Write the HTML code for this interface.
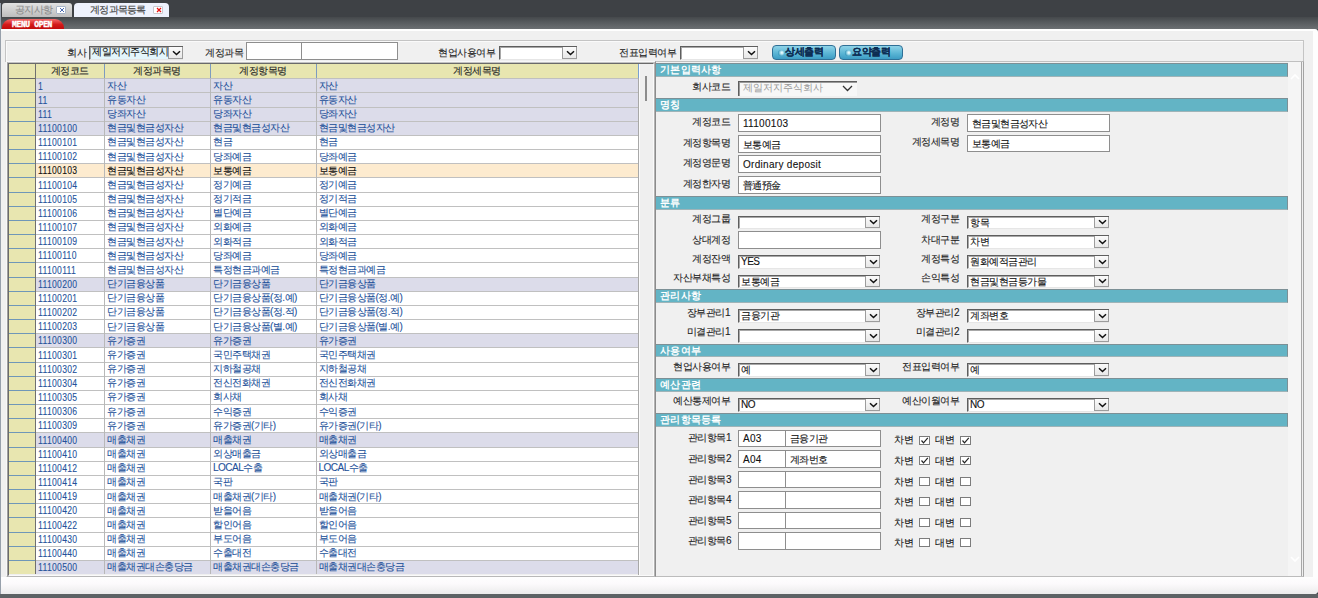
<!DOCTYPE html><html><head><meta charset="utf-8"><style>
*{box-sizing:border-box;margin:0;padding:0}
.t,.lbl,.sel,.inp{-webkit-text-stroke:0.1px currentColor}
html,body{width:1318px;height:598px;overflow:hidden;background:#3e4145;font-family:"Liberation Sans",sans-serif;}
.a{position:absolute}
.t{position:absolute;white-space:nowrap;font-size:10px;line-height:12px;color:#222;letter-spacing:-0.5px}
.sec{position:absolute;background:#63b4c5;border:1px solid #7c9096;border-left:none;border-bottom-color:#9fb4b8;color:#fff;font-weight:bold;font-size:9.6px;line-height:12px;padding-left:4px;letter-spacing:0.3px}
.inp{position:absolute;background:#fff;border:1px solid #8e8e8e;font-size:10px;line-height:14px;padding-left:4px;color:#111;white-space:nowrap;letter-spacing:-0.3px}
.sel{position:absolute;background:#fff;border-top:1px solid #5e5e5e;border-left:1px solid #5e5e5e;box-shadow:inset 1px 1px 0 #a8a8a8;border-bottom:1px solid #e6e6e6;font-size:10px;line-height:12px;padding-left:2px;color:#111;white-space:nowrap;overflow:hidden;letter-spacing:-0.5px}
.btn{position:absolute;right:0;top:0;bottom:0;width:15px;background:linear-gradient(#fbfbfb,#e8e8e8);border:1px solid #9c9c9c;border-top:none}
.btn svg{position:absolute;left:3px;top:50%;margin-top:-3px}
.lbl{position:absolute;white-space:nowrap;font-size:10px;line-height:12px;color:#1c1c1c;text-align:right;letter-spacing:-0.5px}
.cb{position:absolute;width:11px;height:9px;background:#fff;border:1px solid #7c7c7c}
</style></head><body>
<div class="a" style="left:0px;top:0px;width:1318px;height:17px;background:#3e4145"></div>
<div class="a" style="left:0px;top:17px;width:1318px;height:12px;background:linear-gradient(#45484b,#55595c 40%,#6b6f72)"></div>
<div class="a" style="left:2px;top:3px;width:70px;height:14px;background:linear-gradient(#e2e2e2,#bdbdbd);border-radius:3px 3px 0 0"></div>
<div class="t" style="left:15px;top:4px;color:#8c8c8c;font-size:10px;letter-spacing:-0.7px">공지사항</div>
<div class="a" style="left:56px;top:6px;width:10px;height:8px;background:#fff;border:1px solid #a9b6c8;border-radius:1px"><svg width="8" height="6" style="position:absolute;left:1px;top:0px"><path d="M2 1L6 5M6 1L2 5" stroke="#4a6ab0" stroke-width="1"/></svg></div>
<div class="a" style="left:74px;top:3px;width:95px;height:14px;background:#eef2fd;border-radius:4px 4px 0 0"></div>
<div class="t" style="left:90px;top:4px;color:#3a3a3a;font-size:10px;letter-spacing:-0.75px">계정과목등록</div>
<div class="a" style="left:153px;top:6px;width:10px;height:8px;background:#fff;border:1px solid #c9c9d0;border-radius:1px"><svg width="8" height="6" style="position:absolute;left:1px;top:0px"><path d="M2 1L6 5M6 1L2 5" stroke="#e81010" stroke-width="1.2"/></svg></div>
<div class="a" style="left:2px;top:19px;width:62px;height:10px;background:linear-gradient(#f46a6a,#d41a1a 55%,#c00c0c);border-radius:9px 9px 0 0"></div>
<div class="t" style="left:12px;top:20px;color:#fff;font-family:'Liberation Mono',monospace;font-weight:bold;font-size:8px;line-height:10px;letter-spacing:-0.35px;transform:scaleY(1.05);transform-origin:0 0;-webkit-text-stroke:0.35px #fff">MENU OPEN</div>
<div class="a" style="left:1px;top:29px;width:1317px;height:565px;background:#fefefe;border-radius:0 3px 4px 0"></div>
<div class="a" style="left:1px;top:31px;width:1312px;height:546px;background:#f0f0f0"></div>
<div class="a" style="left:1px;top:577px;width:1317px;height:17px;background:linear-gradient(#fefefe,#fcfafc 40%,#ebebeb);border-radius:0 0 4px 0"></div>
<div class="a" style="left:0px;top:3px;width:1px;height:595px;background:#97a0ab"></div>
<div class="a" style="left:5px;top:40px;width:1299px;height:22px;border-top:1px solid #c4c4c4;border-left:1px solid #c4c4c4;border-right:1px solid #c4c4c4;box-shadow:inset 1px 1px 0 #fafafa"></div>
<div class="lbl" style="left:67px;top:47px">회사</div>
<div class="sel" style="left:89px;top:46px;width:94px;height:14px;background:#e3f5fb;font-size:10px;line-height:10px">제일저지주식회시<div class="btn"><svg width="9" height="6"><path d="M1 1.2L4.5 4.5L8 1.2" stroke="#111" stroke-width="1.5" fill="none"/></svg></div></div>
<div class="lbl" style="left:205px;top:47px">계정과목</div>
<div class="inp" style="left:246px;top:42px;width:56px;height:18px;"></div>
<div class="inp" style="left:301px;top:42px;width:97px;height:18px;"></div>
<div class="lbl" style="left:438px;top:47px">현업사용여부</div>
<div class="sel" style="left:499px;top:46px;width:78px;height:14px;"><div class="btn"><svg width="9" height="6"><path d="M1 1.2L4.5 4.5L8 1.2" stroke="#111" stroke-width="1.5" fill="none"/></svg></div></div>
<div class="lbl" style="left:619px;top:47px">전표입력여부</div>
<div class="sel" style="left:680px;top:46px;width:78px;height:14px;"><div class="btn"><svg width="9" height="6"><path d="M1 1.2L4.5 4.5L8 1.2" stroke="#111" stroke-width="1.5" fill="none"/></svg></div></div>
<div class="a" style="left:772px;top:45px;width:64px;height:15px;background:linear-gradient(#8fd3e8,#58b3d3 60%,#3d9cc4);border:1px solid #2f6f96;border-radius:4px"></div>
<div class="a" style="left:778px;top:50px;width:6px;height:6px;border-radius:50%;background:radial-gradient(circle at 65% 45%,#ffffff 0,#bfe9f4 25%,#3f9cc0 70%,#2a7aa0 100%)"></div>
<div class="t" style="left:785px;top:46px;color:#0c2c52;font-weight:bold;font-size:10px">상세출력</div>
<div class="a" style="left:839px;top:45px;width:64px;height:15px;background:linear-gradient(#8fd3e8,#58b3d3 60%,#3d9cc4);border:1px solid #2f6f96;border-radius:4px"></div>
<div class="a" style="left:845px;top:50px;width:6px;height:6px;border-radius:50%;background:radial-gradient(circle at 65% 45%,#ffffff 0,#bfe9f4 25%,#3f9cc0 70%,#2a7aa0 100%)"></div>
<div class="t" style="left:852px;top:46px;color:#0c2c52;font-weight:bold;font-size:10px">요약출력</div>
<div class="a" style="left:6px;top:61px;width:1298px;height:516px;border-top:1px solid #f8f8f8;border-left:1px solid #f8f8f8;border-right:1px solid #a8a8a8;border-bottom:1px solid #b8b8b8"></div>
<div class="a" style="left:7px;top:62px;width:648px;height:515px;border-top:1px solid #c2c2c2;border-left:1px solid #a0a0a0;border-right:1px solid #b4b4b4;border-bottom:1px solid #b8b8b8"></div>
<div class="a" style="left:8px;top:63px;width:646px;height:513px;background:#efefef;border-top:1px solid #6a6a6a;border-left:1px solid #6a6a6a;border-right:1px solid #fafafa;border-bottom:1px solid #fafafa"></div>
<div class="a" style="left:9px;top:64px;width:26px;height:510px;background:#e8e6b0"></div>
<div class="a" style="left:35px;top:64px;width:603px;height:14px;background:#e8e6b0"></div>
<div class="a" style="left:9px;top:78px;width:629px;height:1px;background:#6a6a6a"></div>
<div class="a" style="left:35px;top:64px;width:1px;height:510px;background:#707070"></div>
<div class="a" style="left:104px;top:64px;width:1px;height:14px;background:#7d9bbf"></div>
<div class="a" style="left:210px;top:64px;width:1px;height:14px;background:#7d9bbf"></div>
<div class="a" style="left:315.5px;top:64px;width:1.0px;height:14px;background:#7d9bbf"></div>
<div class="t" style="left:35px;width:69px;top:65px;text-align:center;color:#222">계정코드</div>
<div class="t" style="left:104px;width:106px;top:65px;text-align:center;color:#222">계정과목명</div>
<div class="t" style="left:210px;width:105.5px;top:65px;text-align:center;color:#222">계정항목명</div>
<div class="t" style="left:315.5px;width:322.5px;top:65px;text-align:center;color:#222">계정세목명</div>
<div class="a" style="left:36px;top:79.30px;width:602px;height:13.16px;background:#dcdcea"></div>
<div class="a" style="left:36px;top:78.30px;width:602px;height:1px;background:#c0c0c0"></div>
<div class="t" style="left:38px;top:79.50px;color:#24519a;font-size:11px;letter-spacing:0.4px;transform:scaleX(0.78);transform-origin:0 0">1</div>
<div class="t" style="left:107px;top:79.80px;color:#24519a">자산</div>
<div class="t" style="left:213px;top:79.80px;color:#24519a">자산</div>
<div class="t" style="left:318.5px;top:79.80px;color:#24519a">자산</div>
<div class="a" style="left:36px;top:93.46px;width:602px;height:13.16px;background:#dcdcea"></div>
<div class="a" style="left:9px;top:92.46px;width:26px;height:1px;background:#6f97b8"></div>
<div class="a" style="left:36px;top:92.46px;width:602px;height:1px;background:#c0c0c0"></div>
<div class="t" style="left:38px;top:93.66px;color:#24519a;font-size:11px;letter-spacing:0.4px;transform:scaleX(0.78);transform-origin:0 0">11</div>
<div class="t" style="left:107px;top:93.96px;color:#24519a">유동자산</div>
<div class="t" style="left:213px;top:93.96px;color:#24519a">유동자산</div>
<div class="t" style="left:318.5px;top:93.96px;color:#24519a">유동자산</div>
<div class="a" style="left:36px;top:107.63px;width:602px;height:13.16px;background:#dcdcea"></div>
<div class="a" style="left:9px;top:106.63px;width:26px;height:1px;background:#6f97b8"></div>
<div class="a" style="left:36px;top:106.63px;width:602px;height:1px;background:#c0c0c0"></div>
<div class="t" style="left:38px;top:107.83px;color:#24519a;font-size:11px;letter-spacing:0.4px;transform:scaleX(0.78);transform-origin:0 0">111</div>
<div class="t" style="left:107px;top:108.13px;color:#24519a">당좌자산</div>
<div class="t" style="left:213px;top:108.13px;color:#24519a">당좌자산</div>
<div class="t" style="left:318.5px;top:108.13px;color:#24519a">당좌자산</div>
<div class="a" style="left:36px;top:121.79px;width:602px;height:13.16px;background:#dcdcea"></div>
<div class="a" style="left:9px;top:120.79px;width:26px;height:1px;background:#6f97b8"></div>
<div class="a" style="left:36px;top:120.79px;width:602px;height:1px;background:#c0c0c0"></div>
<div class="t" style="left:38px;top:121.99px;color:#24519a;font-size:11px;letter-spacing:0.4px;transform:scaleX(0.78);transform-origin:0 0">11100100</div>
<div class="t" style="left:107px;top:122.29px;color:#24519a">현금및현금성자산</div>
<div class="t" style="left:213px;top:122.29px;color:#24519a">현금및현금성자산</div>
<div class="t" style="left:318.5px;top:122.29px;color:#24519a">현금및현금성자산</div>
<div class="a" style="left:36px;top:135.95px;width:602px;height:13.16px;background:#ffffff"></div>
<div class="a" style="left:9px;top:134.95px;width:26px;height:1px;background:#6f97b8"></div>
<div class="a" style="left:36px;top:134.95px;width:602px;height:1px;background:#c0c0c0"></div>
<div class="t" style="left:38px;top:136.15px;color:#24519a;font-size:11px;letter-spacing:0.4px;transform:scaleX(0.78);transform-origin:0 0">11100101</div>
<div class="t" style="left:107px;top:136.45px;color:#24519a">현금및현금성자산</div>
<div class="t" style="left:213px;top:136.45px;color:#24519a">현금</div>
<div class="t" style="left:318.5px;top:136.45px;color:#24519a">현금</div>
<div class="a" style="left:36px;top:150.11px;width:602px;height:13.16px;background:#ffffff"></div>
<div class="a" style="left:9px;top:149.11px;width:26px;height:1px;background:#6f97b8"></div>
<div class="a" style="left:36px;top:149.11px;width:602px;height:1px;background:#c0c0c0"></div>
<div class="t" style="left:38px;top:150.31px;color:#24519a;font-size:11px;letter-spacing:0.4px;transform:scaleX(0.78);transform-origin:0 0">11100102</div>
<div class="t" style="left:107px;top:150.61px;color:#24519a">현금및현금성자산</div>
<div class="t" style="left:213px;top:150.61px;color:#24519a">당좌예금</div>
<div class="t" style="left:318.5px;top:150.61px;color:#24519a">당좌예금</div>
<div class="a" style="left:36px;top:164.28px;width:602px;height:13.16px;background:#fdebcf"></div>
<div class="a" style="left:9px;top:163.28px;width:26px;height:1px;background:#6f97b8"></div>
<div class="a" style="left:36px;top:163.28px;width:602px;height:1px;background:#c0c0c0"></div>
<div class="t" style="left:38px;top:164.48px;color:#111;font-size:11px;letter-spacing:0.4px;transform:scaleX(0.78);transform-origin:0 0">11100103</div>
<div class="t" style="left:107px;top:164.78px;color:#111">현금및현금성자산</div>
<div class="t" style="left:213px;top:164.78px;color:#111">보통예금</div>
<div class="t" style="left:318.5px;top:164.78px;color:#111">보통예금</div>
<div class="a" style="left:36px;top:178.44px;width:602px;height:13.16px;background:#ffffff"></div>
<div class="a" style="left:9px;top:177.44px;width:26px;height:1px;background:#6f97b8"></div>
<div class="a" style="left:36px;top:177.44px;width:602px;height:1px;background:#c0c0c0"></div>
<div class="t" style="left:38px;top:178.64px;color:#24519a;font-size:11px;letter-spacing:0.4px;transform:scaleX(0.78);transform-origin:0 0">11100104</div>
<div class="t" style="left:107px;top:178.94px;color:#24519a">현금및현금성자산</div>
<div class="t" style="left:213px;top:178.94px;color:#24519a">정기예금</div>
<div class="t" style="left:318.5px;top:178.94px;color:#24519a">정기예금</div>
<div class="a" style="left:36px;top:192.60px;width:602px;height:13.16px;background:#ffffff"></div>
<div class="a" style="left:9px;top:191.60px;width:26px;height:1px;background:#6f97b8"></div>
<div class="a" style="left:36px;top:191.60px;width:602px;height:1px;background:#c0c0c0"></div>
<div class="t" style="left:38px;top:192.80px;color:#24519a;font-size:11px;letter-spacing:0.4px;transform:scaleX(0.78);transform-origin:0 0">11100105</div>
<div class="t" style="left:107px;top:193.10px;color:#24519a">현금및현금성자산</div>
<div class="t" style="left:213px;top:193.10px;color:#24519a">정기적금</div>
<div class="t" style="left:318.5px;top:193.10px;color:#24519a">정기적금</div>
<div class="a" style="left:36px;top:206.77px;width:602px;height:13.16px;background:#ffffff"></div>
<div class="a" style="left:9px;top:205.77px;width:26px;height:1px;background:#6f97b8"></div>
<div class="a" style="left:36px;top:205.77px;width:602px;height:1px;background:#c0c0c0"></div>
<div class="t" style="left:38px;top:206.97px;color:#24519a;font-size:11px;letter-spacing:0.4px;transform:scaleX(0.78);transform-origin:0 0">11100106</div>
<div class="t" style="left:107px;top:207.27px;color:#24519a">현금및현금성자산</div>
<div class="t" style="left:213px;top:207.27px;color:#24519a">별단예금</div>
<div class="t" style="left:318.5px;top:207.27px;color:#24519a">별단예금</div>
<div class="a" style="left:36px;top:220.93px;width:602px;height:13.16px;background:#ffffff"></div>
<div class="a" style="left:9px;top:219.93px;width:26px;height:1px;background:#6f97b8"></div>
<div class="a" style="left:36px;top:219.93px;width:602px;height:1px;background:#c0c0c0"></div>
<div class="t" style="left:38px;top:221.13px;color:#24519a;font-size:11px;letter-spacing:0.4px;transform:scaleX(0.78);transform-origin:0 0">11100107</div>
<div class="t" style="left:107px;top:221.43px;color:#24519a">현금및현금성자산</div>
<div class="t" style="left:213px;top:221.43px;color:#24519a">외화예금</div>
<div class="t" style="left:318.5px;top:221.43px;color:#24519a">외화예금</div>
<div class="a" style="left:36px;top:235.09px;width:602px;height:13.16px;background:#ffffff"></div>
<div class="a" style="left:9px;top:234.09px;width:26px;height:1px;background:#6f97b8"></div>
<div class="a" style="left:36px;top:234.09px;width:602px;height:1px;background:#c0c0c0"></div>
<div class="t" style="left:38px;top:235.29px;color:#24519a;font-size:11px;letter-spacing:0.4px;transform:scaleX(0.78);transform-origin:0 0">11100109</div>
<div class="t" style="left:107px;top:235.59px;color:#24519a">현금및현금성자산</div>
<div class="t" style="left:213px;top:235.59px;color:#24519a">외화적금</div>
<div class="t" style="left:318.5px;top:235.59px;color:#24519a">외화적금</div>
<div class="a" style="left:36px;top:249.25px;width:602px;height:13.16px;background:#ffffff"></div>
<div class="a" style="left:9px;top:248.25px;width:26px;height:1px;background:#6f97b8"></div>
<div class="a" style="left:36px;top:248.25px;width:602px;height:1px;background:#c0c0c0"></div>
<div class="t" style="left:38px;top:249.45px;color:#24519a;font-size:11px;letter-spacing:0.4px;transform:scaleX(0.78);transform-origin:0 0">11100110</div>
<div class="t" style="left:107px;top:249.75px;color:#24519a">현금및현금성자산</div>
<div class="t" style="left:213px;top:249.75px;color:#24519a">당좌예금</div>
<div class="t" style="left:318.5px;top:249.75px;color:#24519a">당좌예금</div>
<div class="a" style="left:36px;top:263.42px;width:602px;height:13.16px;background:#ffffff"></div>
<div class="a" style="left:9px;top:262.42px;width:26px;height:1px;background:#6f97b8"></div>
<div class="a" style="left:36px;top:262.42px;width:602px;height:1px;background:#c0c0c0"></div>
<div class="t" style="left:38px;top:263.62px;color:#24519a;font-size:11px;letter-spacing:0.4px;transform:scaleX(0.78);transform-origin:0 0">11100111</div>
<div class="t" style="left:107px;top:263.92px;color:#24519a">현금및현금성자산</div>
<div class="t" style="left:213px;top:263.92px;color:#24519a">특정현금과예금</div>
<div class="t" style="left:318.5px;top:263.92px;color:#24519a">특정현금과예금</div>
<div class="a" style="left:36px;top:277.58px;width:602px;height:13.16px;background:#dcdcea"></div>
<div class="a" style="left:9px;top:276.58px;width:26px;height:1px;background:#6f97b8"></div>
<div class="a" style="left:36px;top:276.58px;width:602px;height:1px;background:#c0c0c0"></div>
<div class="t" style="left:38px;top:277.78px;color:#24519a;font-size:11px;letter-spacing:0.4px;transform:scaleX(0.78);transform-origin:0 0">11100200</div>
<div class="t" style="left:107px;top:278.08px;color:#24519a">단기금융상품</div>
<div class="t" style="left:213px;top:278.08px;color:#24519a">단기금융상품</div>
<div class="t" style="left:318.5px;top:278.08px;color:#24519a">단기금융상품</div>
<div class="a" style="left:36px;top:291.74px;width:602px;height:13.16px;background:#ffffff"></div>
<div class="a" style="left:9px;top:290.74px;width:26px;height:1px;background:#6f97b8"></div>
<div class="a" style="left:36px;top:290.74px;width:602px;height:1px;background:#c0c0c0"></div>
<div class="t" style="left:38px;top:291.94px;color:#24519a;font-size:11px;letter-spacing:0.4px;transform:scaleX(0.78);transform-origin:0 0">11100201</div>
<div class="t" style="left:107px;top:292.24px;color:#24519a">단기금융상품</div>
<div class="t" style="left:213px;top:292.24px;color:#24519a">단기금융상품(정.예)</div>
<div class="t" style="left:318.5px;top:292.24px;color:#24519a">단기금융상품(정.예)</div>
<div class="a" style="left:36px;top:305.91px;width:602px;height:13.16px;background:#ffffff"></div>
<div class="a" style="left:9px;top:304.91px;width:26px;height:1px;background:#6f97b8"></div>
<div class="a" style="left:36px;top:304.91px;width:602px;height:1px;background:#c0c0c0"></div>
<div class="t" style="left:38px;top:306.11px;color:#24519a;font-size:11px;letter-spacing:0.4px;transform:scaleX(0.78);transform-origin:0 0">11100202</div>
<div class="t" style="left:107px;top:306.41px;color:#24519a">단기금융상품</div>
<div class="t" style="left:213px;top:306.41px;color:#24519a">단기금융상품(정.적)</div>
<div class="t" style="left:318.5px;top:306.41px;color:#24519a">단기금융상품(정.적)</div>
<div class="a" style="left:36px;top:320.07px;width:602px;height:13.16px;background:#ffffff"></div>
<div class="a" style="left:9px;top:319.07px;width:26px;height:1px;background:#6f97b8"></div>
<div class="a" style="left:36px;top:319.07px;width:602px;height:1px;background:#c0c0c0"></div>
<div class="t" style="left:38px;top:320.27px;color:#24519a;font-size:11px;letter-spacing:0.4px;transform:scaleX(0.78);transform-origin:0 0">11100203</div>
<div class="t" style="left:107px;top:320.57px;color:#24519a">단기금융상품</div>
<div class="t" style="left:213px;top:320.57px;color:#24519a">단기금융상품(별.예)</div>
<div class="t" style="left:318.5px;top:320.57px;color:#24519a">단기금융상품(별.예)</div>
<div class="a" style="left:36px;top:334.23px;width:602px;height:13.16px;background:#dcdcea"></div>
<div class="a" style="left:9px;top:333.23px;width:26px;height:1px;background:#6f97b8"></div>
<div class="a" style="left:36px;top:333.23px;width:602px;height:1px;background:#c0c0c0"></div>
<div class="t" style="left:38px;top:334.43px;color:#24519a;font-size:11px;letter-spacing:0.4px;transform:scaleX(0.78);transform-origin:0 0">11100300</div>
<div class="t" style="left:107px;top:334.73px;color:#24519a">유가증권</div>
<div class="t" style="left:213px;top:334.73px;color:#24519a">유가증권</div>
<div class="t" style="left:318.5px;top:334.73px;color:#24519a">유가증권</div>
<div class="a" style="left:36px;top:348.39px;width:602px;height:13.16px;background:#ffffff"></div>
<div class="a" style="left:9px;top:347.39px;width:26px;height:1px;background:#6f97b8"></div>
<div class="a" style="left:36px;top:347.39px;width:602px;height:1px;background:#c0c0c0"></div>
<div class="t" style="left:38px;top:348.59px;color:#24519a;font-size:11px;letter-spacing:0.4px;transform:scaleX(0.78);transform-origin:0 0">11100301</div>
<div class="t" style="left:107px;top:348.89px;color:#24519a">유가증권</div>
<div class="t" style="left:213px;top:348.89px;color:#24519a">국민주택채권</div>
<div class="t" style="left:318.5px;top:348.89px;color:#24519a">국민주택채권</div>
<div class="a" style="left:36px;top:362.56px;width:602px;height:13.16px;background:#ffffff"></div>
<div class="a" style="left:9px;top:361.56px;width:26px;height:1px;background:#6f97b8"></div>
<div class="a" style="left:36px;top:361.56px;width:602px;height:1px;background:#c0c0c0"></div>
<div class="t" style="left:38px;top:362.76px;color:#24519a;font-size:11px;letter-spacing:0.4px;transform:scaleX(0.78);transform-origin:0 0">11100302</div>
<div class="t" style="left:107px;top:363.06px;color:#24519a">유가증권</div>
<div class="t" style="left:213px;top:363.06px;color:#24519a">지하철공채</div>
<div class="t" style="left:318.5px;top:363.06px;color:#24519a">지하철공채</div>
<div class="a" style="left:36px;top:376.72px;width:602px;height:13.16px;background:#ffffff"></div>
<div class="a" style="left:9px;top:375.72px;width:26px;height:1px;background:#6f97b8"></div>
<div class="a" style="left:36px;top:375.72px;width:602px;height:1px;background:#c0c0c0"></div>
<div class="t" style="left:38px;top:376.92px;color:#24519a;font-size:11px;letter-spacing:0.4px;transform:scaleX(0.78);transform-origin:0 0">11100304</div>
<div class="t" style="left:107px;top:377.22px;color:#24519a">유가증권</div>
<div class="t" style="left:213px;top:377.22px;color:#24519a">전신전화채권</div>
<div class="t" style="left:318.5px;top:377.22px;color:#24519a">전신전화채권</div>
<div class="a" style="left:36px;top:390.88px;width:602px;height:13.16px;background:#ffffff"></div>
<div class="a" style="left:9px;top:389.88px;width:26px;height:1px;background:#6f97b8"></div>
<div class="a" style="left:36px;top:389.88px;width:602px;height:1px;background:#c0c0c0"></div>
<div class="t" style="left:38px;top:391.08px;color:#24519a;font-size:11px;letter-spacing:0.4px;transform:scaleX(0.78);transform-origin:0 0">11100305</div>
<div class="t" style="left:107px;top:391.38px;color:#24519a">유가증권</div>
<div class="t" style="left:213px;top:391.38px;color:#24519a">회사채</div>
<div class="t" style="left:318.5px;top:391.38px;color:#24519a">회사채</div>
<div class="a" style="left:36px;top:405.05px;width:602px;height:13.16px;background:#ffffff"></div>
<div class="a" style="left:9px;top:404.05px;width:26px;height:1px;background:#6f97b8"></div>
<div class="a" style="left:36px;top:404.05px;width:602px;height:1px;background:#c0c0c0"></div>
<div class="t" style="left:38px;top:405.25px;color:#24519a;font-size:11px;letter-spacing:0.4px;transform:scaleX(0.78);transform-origin:0 0">11100306</div>
<div class="t" style="left:107px;top:405.55px;color:#24519a">유가증권</div>
<div class="t" style="left:213px;top:405.55px;color:#24519a">수익증권</div>
<div class="t" style="left:318.5px;top:405.55px;color:#24519a">수익증권</div>
<div class="a" style="left:36px;top:419.21px;width:602px;height:13.16px;background:#ffffff"></div>
<div class="a" style="left:9px;top:418.21px;width:26px;height:1px;background:#6f97b8"></div>
<div class="a" style="left:36px;top:418.21px;width:602px;height:1px;background:#c0c0c0"></div>
<div class="t" style="left:38px;top:419.41px;color:#24519a;font-size:11px;letter-spacing:0.4px;transform:scaleX(0.78);transform-origin:0 0">11100309</div>
<div class="t" style="left:107px;top:419.71px;color:#24519a">유가증권</div>
<div class="t" style="left:213px;top:419.71px;color:#24519a">유가증권(기타)</div>
<div class="t" style="left:318.5px;top:419.71px;color:#24519a">유가증권(기타)</div>
<div class="a" style="left:36px;top:433.37px;width:602px;height:13.16px;background:#dcdcea"></div>
<div class="a" style="left:9px;top:432.37px;width:26px;height:1px;background:#6f97b8"></div>
<div class="a" style="left:36px;top:432.37px;width:602px;height:1px;background:#c0c0c0"></div>
<div class="t" style="left:38px;top:433.57px;color:#24519a;font-size:11px;letter-spacing:0.4px;transform:scaleX(0.78);transform-origin:0 0">11100400</div>
<div class="t" style="left:107px;top:433.87px;color:#24519a">매출채권</div>
<div class="t" style="left:213px;top:433.87px;color:#24519a">매출채권</div>
<div class="t" style="left:318.5px;top:433.87px;color:#24519a">매출채권</div>
<div class="a" style="left:36px;top:447.53px;width:602px;height:13.16px;background:#ffffff"></div>
<div class="a" style="left:9px;top:446.53px;width:26px;height:1px;background:#6f97b8"></div>
<div class="a" style="left:36px;top:446.53px;width:602px;height:1px;background:#c0c0c0"></div>
<div class="t" style="left:38px;top:447.73px;color:#24519a;font-size:11px;letter-spacing:0.4px;transform:scaleX(0.78);transform-origin:0 0">11100410</div>
<div class="t" style="left:107px;top:448.03px;color:#24519a">매출채권</div>
<div class="t" style="left:213px;top:448.03px;color:#24519a">외상매출금</div>
<div class="t" style="left:318.5px;top:448.03px;color:#24519a">외상매출금</div>
<div class="a" style="left:36px;top:461.70px;width:602px;height:13.16px;background:#ffffff"></div>
<div class="a" style="left:9px;top:460.70px;width:26px;height:1px;background:#6f97b8"></div>
<div class="a" style="left:36px;top:460.70px;width:602px;height:1px;background:#c0c0c0"></div>
<div class="t" style="left:38px;top:461.90px;color:#24519a;font-size:11px;letter-spacing:0.4px;transform:scaleX(0.78);transform-origin:0 0">11100412</div>
<div class="t" style="left:107px;top:462.20px;color:#24519a">매출채권</div>
<div class="t" style="left:213px;top:462.20px;color:#24519a">LOCAL수출</div>
<div class="t" style="left:318.5px;top:462.20px;color:#24519a">LOCAL수출</div>
<div class="a" style="left:36px;top:475.86px;width:602px;height:13.16px;background:#ffffff"></div>
<div class="a" style="left:9px;top:474.86px;width:26px;height:1px;background:#6f97b8"></div>
<div class="a" style="left:36px;top:474.86px;width:602px;height:1px;background:#c0c0c0"></div>
<div class="t" style="left:38px;top:476.06px;color:#24519a;font-size:11px;letter-spacing:0.4px;transform:scaleX(0.78);transform-origin:0 0">11100414</div>
<div class="t" style="left:107px;top:476.36px;color:#24519a">매출채권</div>
<div class="t" style="left:213px;top:476.36px;color:#24519a">국판</div>
<div class="t" style="left:318.5px;top:476.36px;color:#24519a">국판</div>
<div class="a" style="left:36px;top:490.02px;width:602px;height:13.16px;background:#ffffff"></div>
<div class="a" style="left:9px;top:489.02px;width:26px;height:1px;background:#6f97b8"></div>
<div class="a" style="left:36px;top:489.02px;width:602px;height:1px;background:#c0c0c0"></div>
<div class="t" style="left:38px;top:490.22px;color:#24519a;font-size:11px;letter-spacing:0.4px;transform:scaleX(0.78);transform-origin:0 0">11100419</div>
<div class="t" style="left:107px;top:490.52px;color:#24519a">매출채권</div>
<div class="t" style="left:213px;top:490.52px;color:#24519a">매출채권(기타)</div>
<div class="t" style="left:318.5px;top:490.52px;color:#24519a">매출채권(기타)</div>
<div class="a" style="left:36px;top:504.19px;width:602px;height:13.16px;background:#ffffff"></div>
<div class="a" style="left:9px;top:503.19px;width:26px;height:1px;background:#6f97b8"></div>
<div class="a" style="left:36px;top:503.19px;width:602px;height:1px;background:#c0c0c0"></div>
<div class="t" style="left:38px;top:504.39px;color:#24519a;font-size:11px;letter-spacing:0.4px;transform:scaleX(0.78);transform-origin:0 0">11100420</div>
<div class="t" style="left:107px;top:504.69px;color:#24519a">매출채권</div>
<div class="t" style="left:213px;top:504.69px;color:#24519a">받을어음</div>
<div class="t" style="left:318.5px;top:504.69px;color:#24519a">받을어음</div>
<div class="a" style="left:36px;top:518.35px;width:602px;height:13.16px;background:#ffffff"></div>
<div class="a" style="left:9px;top:517.35px;width:26px;height:1px;background:#6f97b8"></div>
<div class="a" style="left:36px;top:517.35px;width:602px;height:1px;background:#c0c0c0"></div>
<div class="t" style="left:38px;top:518.55px;color:#24519a;font-size:11px;letter-spacing:0.4px;transform:scaleX(0.78);transform-origin:0 0">11100422</div>
<div class="t" style="left:107px;top:518.85px;color:#24519a">매출채권</div>
<div class="t" style="left:213px;top:518.85px;color:#24519a">할인어음</div>
<div class="t" style="left:318.5px;top:518.85px;color:#24519a">할인어음</div>
<div class="a" style="left:36px;top:532.51px;width:602px;height:13.16px;background:#ffffff"></div>
<div class="a" style="left:9px;top:531.51px;width:26px;height:1px;background:#6f97b8"></div>
<div class="a" style="left:36px;top:531.51px;width:602px;height:1px;background:#c0c0c0"></div>
<div class="t" style="left:38px;top:532.71px;color:#24519a;font-size:11px;letter-spacing:0.4px;transform:scaleX(0.78);transform-origin:0 0">11100430</div>
<div class="t" style="left:107px;top:533.01px;color:#24519a">매출채권</div>
<div class="t" style="left:213px;top:533.01px;color:#24519a">부도어음</div>
<div class="t" style="left:318.5px;top:533.01px;color:#24519a">부도어음</div>
<div class="a" style="left:36px;top:546.67px;width:602px;height:13.16px;background:#ffffff"></div>
<div class="a" style="left:9px;top:545.67px;width:26px;height:1px;background:#6f97b8"></div>
<div class="a" style="left:36px;top:545.67px;width:602px;height:1px;background:#c0c0c0"></div>
<div class="t" style="left:38px;top:546.87px;color:#24519a;font-size:11px;letter-spacing:0.4px;transform:scaleX(0.78);transform-origin:0 0">11100440</div>
<div class="t" style="left:107px;top:547.17px;color:#24519a">매출채권</div>
<div class="t" style="left:213px;top:547.17px;color:#24519a">수출대전</div>
<div class="t" style="left:318.5px;top:547.17px;color:#24519a">수출대전</div>
<div class="a" style="left:36px;top:560.84px;width:602px;height:13.16px;background:#dcdcea"></div>
<div class="a" style="left:9px;top:559.84px;width:26px;height:1px;background:#6f97b8"></div>
<div class="a" style="left:36px;top:559.84px;width:602px;height:1px;background:#c0c0c0"></div>
<div class="t" style="left:38px;top:561.04px;color:#24519a;font-size:11px;letter-spacing:0.4px;transform:scaleX(0.78);transform-origin:0 0">11100500</div>
<div class="t" style="left:107px;top:561.34px;color:#24519a">매출채권대손충당금</div>
<div class="t" style="left:213px;top:561.34px;color:#24519a">매출채권대손충당금</div>
<div class="t" style="left:318.5px;top:561.34px;color:#24519a">매출채권대손충당금</div>
<div class="a" style="left:104px;top:78px;width:1px;height:496px;background:#b8b8b8"></div>
<div class="a" style="left:210px;top:78px;width:1px;height:496px;background:#b8b8b8"></div>
<div class="a" style="left:315.5px;top:78px;width:1.0px;height:496px;background:#b8b8b8"></div>
<div class="a" style="left:638px;top:64px;width:1px;height:14px;background:#7aa0d0"></div>
<div class="a" style="left:638px;top:78px;width:1px;height:497px;background:#a8a8a8"></div>
<div class="a" style="left:639px;top:64px;width:1px;height:511px;background:#fbfbfb"></div>
<div class="a" style="left:645px;top:76px;width:2px;height:25px;background:#8c8c8c"></div>
<div class="a" style="left:655px;top:61px;width:649px;height:516px;border-top:1px solid #c0c0c0;border-left:1px solid #8c8c8c;border-right:1px solid #a4a4a4;border-bottom:1px solid #bcbcbc"></div>
<div class="a" style="left:1301px;top:62px;width:1px;height:514px;background:#a8a8a8"></div>
<div class="a" style="left:1288px;top:62px;width:13px;height:514px;background:#f5f5f5"></div>
<svg class="a" style="left:1290px;top:73px" width="10" height="7"><path d="M1 6L5 2L9 6" stroke="#fff" stroke-width="1.6" fill="none"/></svg>
<svg class="a" style="left:1290px;top:556px" width="10" height="7"><path d="M1 1L5 5L9 1" stroke="#fff" stroke-width="1.6" fill="none"/></svg>
<div class="sec" style="left:656px;top:63px;width:632px;height:14px;">기본입력사항</div>
<div class="sec" style="left:656px;top:98px;width:632px;height:14px;">명칭</div>
<div class="sec" style="left:656px;top:196px;width:632px;height:14px;">분류</div>
<div class="sec" style="left:656px;top:289px;width:632px;height:14px;">관리사항</div>
<div class="sec" style="left:656px;top:344px;width:632px;height:13px;">사용여부</div>
<div class="sec" style="left:656px;top:378px;width:632px;height:14px;">예산관련</div>
<div class="sec" style="left:656px;top:413px;width:632px;height:14px;">관리항목등록</div>
<div class="lbl" style="right:588px;top:81px">회사코드</div>
<div class="a" style="left:738px;top:81px;width:119px;height:15px;background:#f7f7f7;border-top:1px solid #5e5e5e;border-left:1px solid #5e5e5e;box-shadow:inset 1px 1px 0 #9a9a9a;font-size:10px;line-height:12px;color:#999;padding-left:4px;white-space:nowrap">제일저지주식회사<svg width="11" height="7" style="position:absolute;right:4px;top:3px"><path d="M1 1L5.5 5.5L10 1" stroke="#333" stroke-width="1.3" fill="none"/></svg></div>
<div class="lbl" style="right:588px;top:116px">계정코드</div>
<div class="inp" style="left:738px;top:114px;width:143px;height:18px;line-height:17px;letter-spacing:0.3px">11100103</div>
<div class="lbl" style="right:588px;top:137px">계정항목명</div>
<div class="inp" style="left:738px;top:135px;width:143px;height:18px;line-height:17px;letter-spacing:-0.6px">보통예금</div>
<div class="lbl" style="right:588px;top:157px">계정영문명</div>
<div class="inp" style="left:738px;top:155px;width:143px;height:18px;line-height:17px;letter-spacing:0.3px">Ordinary deposit</div>
<div class="lbl" style="right:588px;top:178px">계정한자명</div>
<div class="inp" style="left:738px;top:176px;width:143px;height:18px;line-height:17px;letter-spacing:-0.6px">普通預金</div>
<div class="lbl" style="right:359px;top:116px">계정명</div>
<div class="inp" style="left:967px;top:114px;width:143px;height:18px;line-height:17px;letter-spacing:-0.6px">현금및현금성자산</div>
<div class="lbl" style="right:359px;top:136px">계정세목명</div>
<div class="inp" style="left:967px;top:135px;width:143px;height:17px;line-height:16px;letter-spacing:-0.6px">보통예금</div>
<div class="lbl" style="right:588px;top:213px">계정그룹</div>
<div class="sel" style="left:738px;top:216px;width:142px;height:13px;"><div class="btn"><svg width="9" height="6"><path d="M1 1.2L4.5 4.5L8 1.2" stroke="#111" stroke-width="1.5" fill="none"/></svg></div></div>
<div class="lbl" style="right:588px;top:234px">상대계정</div>
<div class="inp" style="left:738px;top:231px;width:143px;height:18px;line-height:17px;letter-spacing:0.3px"></div>
<div class="lbl" style="right:588px;top:253px">계정잔액</div>
<div class="sel" style="left:738px;top:255px;width:142px;height:14px;">YES<div class="btn"><svg width="9" height="6"><path d="M1 1.2L4.5 4.5L8 1.2" stroke="#111" stroke-width="1.5" fill="none"/></svg></div></div>
<div class="lbl" style="right:588px;top:272px">자산부채특성</div>
<div class="sel" style="left:738px;top:275px;width:142px;height:13px;">보통예금<div class="btn"><svg width="9" height="6"><path d="M1 1.2L4.5 4.5L8 1.2" stroke="#111" stroke-width="1.5" fill="none"/></svg></div></div>
<div class="lbl" style="right:359px;top:213px">계정구분</div>
<div class="sel" style="left:967px;top:216px;width:142px;height:13px;">항목<div class="btn"><svg width="9" height="6"><path d="M1 1.2L4.5 4.5L8 1.2" stroke="#111" stroke-width="1.5" fill="none"/></svg></div></div>
<div class="lbl" style="right:359px;top:234px">차대구분</div>
<div class="sel" style="left:967px;top:235px;width:142px;height:14px;">차변<div class="btn"><svg width="9" height="6"><path d="M1 1.2L4.5 4.5L8 1.2" stroke="#111" stroke-width="1.5" fill="none"/></svg></div></div>
<div class="lbl" style="right:359px;top:253px">계정특성</div>
<div class="sel" style="left:967px;top:255px;width:142px;height:14px;">원화예적금관리<div class="btn"><svg width="9" height="6"><path d="M1 1.2L4.5 4.5L8 1.2" stroke="#111" stroke-width="1.5" fill="none"/></svg></div></div>
<div class="lbl" style="right:359px;top:272px">손익특성</div>
<div class="sel" style="left:967px;top:275px;width:142px;height:13px;">현금및현금등가물<div class="btn"><svg width="9" height="6"><path d="M1 1.2L4.5 4.5L8 1.2" stroke="#111" stroke-width="1.5" fill="none"/></svg></div></div>
<div class="lbl" style="right:588px;top:307px">장부관리1</div>
<div class="sel" style="left:738px;top:309px;width:142px;height:14px;">금융기관<div class="btn"><svg width="9" height="6"><path d="M1 1.2L4.5 4.5L8 1.2" stroke="#111" stroke-width="1.5" fill="none"/></svg></div></div>
<div class="lbl" style="right:588px;top:326px">미결관리1</div>
<div class="sel" style="left:738px;top:329px;width:142px;height:14px;"><div class="btn"><svg width="9" height="6"><path d="M1 1.2L4.5 4.5L8 1.2" stroke="#111" stroke-width="1.5" fill="none"/></svg></div></div>
<div class="lbl" style="right:359px;top:307px">장부관리2</div>
<div class="sel" style="left:967px;top:309px;width:142px;height:14px;">계좌변호<div class="btn"><svg width="9" height="6"><path d="M1 1.2L4.5 4.5L8 1.2" stroke="#111" stroke-width="1.5" fill="none"/></svg></div></div>
<div class="lbl" style="right:359px;top:326px">미결관리2</div>
<div class="sel" style="left:967px;top:329px;width:142px;height:14px;"><div class="btn"><svg width="9" height="6"><path d="M1 1.2L4.5 4.5L8 1.2" stroke="#111" stroke-width="1.5" fill="none"/></svg></div></div>
<div class="lbl" style="right:588px;top:361px">현업사용여부</div>
<div class="sel" style="left:738px;top:363px;width:142px;height:14px;">예<div class="btn"><svg width="9" height="6"><path d="M1 1.2L4.5 4.5L8 1.2" stroke="#111" stroke-width="1.5" fill="none"/></svg></div></div>
<div class="lbl" style="right:359px;top:361px">전표입력여부</div>
<div class="sel" style="left:967px;top:363px;width:142px;height:14px;">예<div class="btn"><svg width="9" height="6"><path d="M1 1.2L4.5 4.5L8 1.2" stroke="#111" stroke-width="1.5" fill="none"/></svg></div></div>
<div class="lbl" style="right:588px;top:395px">예산통제여부</div>
<div class="sel" style="left:738px;top:398px;width:142px;height:14px;">NO<div class="btn"><svg width="9" height="6"><path d="M1 1.2L4.5 4.5L8 1.2" stroke="#111" stroke-width="1.5" fill="none"/></svg></div></div>
<div class="lbl" style="right:359px;top:395px">예산이월여부</div>
<div class="sel" style="left:967px;top:398px;width:142px;height:14px;">NO<div class="btn"><svg width="9" height="6"><path d="M1 1.2L4.5 4.5L8 1.2" stroke="#111" stroke-width="1.5" fill="none"/></svg></div></div>
<div class="lbl" style="right:587px;top:432px">관리항목1</div>
<div class="inp" style="left:738px;top:430px;width:48px;height:17px;line-height:16px;letter-spacing:0.3px">A03</div>
<div class="inp" style="left:785px;top:430px;width:96px;height:17px;line-height:16px;letter-spacing:-0.6px">금융기관</div>
<div class="t" style="left:894px;top:434px;color:#111">차변</div>
<div class="t" style="left:935px;top:434px;color:#111">대변</div>
<div class="cb" style="left:919px;top:436px"><svg width="9" height="7" style="position:absolute;left:0;top:0"><path d="M1.5 3.5L3.5 5.8L7.8 0.8" stroke="#222" stroke-width="1.2" fill="none"/></svg></div>
<div class="cb" style="left:960px;top:436px"><svg width="9" height="7" style="position:absolute;left:0;top:0"><path d="M1.5 3.5L3.5 5.8L7.8 0.8" stroke="#222" stroke-width="1.2" fill="none"/></svg></div>
<div class="lbl" style="right:587px;top:453px">관리항목2</div>
<div class="inp" style="left:738px;top:450px;width:48px;height:18px;line-height:17px;letter-spacing:0.3px">A04</div>
<div class="inp" style="left:785px;top:450px;width:96px;height:18px;line-height:17px;letter-spacing:-0.6px">계좌번호</div>
<div class="t" style="left:894px;top:455px;color:#111">차변</div>
<div class="t" style="left:935px;top:455px;color:#111">대변</div>
<div class="cb" style="left:919px;top:456px"><svg width="9" height="7" style="position:absolute;left:0;top:0"><path d="M1.5 3.5L3.5 5.8L7.8 0.8" stroke="#222" stroke-width="1.2" fill="none"/></svg></div>
<div class="cb" style="left:960px;top:456px"><svg width="9" height="7" style="position:absolute;left:0;top:0"><path d="M1.5 3.5L3.5 5.8L7.8 0.8" stroke="#222" stroke-width="1.2" fill="none"/></svg></div>
<div class="lbl" style="right:587px;top:474px">관리항목3</div>
<div class="inp" style="left:738px;top:471px;width:48px;height:17px;line-height:16px;letter-spacing:0.3px"></div>
<div class="inp" style="left:785px;top:471px;width:96px;height:17px;line-height:16px;letter-spacing:0.3px"></div>
<div class="t" style="left:894px;top:476px;color:#111">차변</div>
<div class="t" style="left:935px;top:476px;color:#111">대변</div>
<div class="cb" style="left:919px;top:477px"></div>
<div class="cb" style="left:960px;top:477px"></div>
<div class="lbl" style="right:587px;top:494px">관리항목4</div>
<div class="inp" style="left:738px;top:491px;width:48px;height:18px;line-height:17px;letter-spacing:0.3px"></div>
<div class="inp" style="left:785px;top:491px;width:96px;height:18px;line-height:17px;letter-spacing:0.3px"></div>
<div class="t" style="left:894px;top:496px;color:#111">차변</div>
<div class="t" style="left:935px;top:496px;color:#111">대변</div>
<div class="cb" style="left:919px;top:497px"></div>
<div class="cb" style="left:960px;top:497px"></div>
<div class="lbl" style="right:587px;top:515px">관리항목5</div>
<div class="inp" style="left:738px;top:512px;width:48px;height:17px;line-height:16px;letter-spacing:0.3px"></div>
<div class="inp" style="left:785px;top:512px;width:96px;height:17px;line-height:16px;letter-spacing:0.3px"></div>
<div class="t" style="left:894px;top:517px;color:#111">차변</div>
<div class="t" style="left:935px;top:517px;color:#111">대변</div>
<div class="cb" style="left:919px;top:518px"></div>
<div class="cb" style="left:960px;top:518px"></div>
<div class="lbl" style="right:587px;top:535px">관리항목6</div>
<div class="inp" style="left:738px;top:532px;width:48px;height:18px;line-height:17px;letter-spacing:0.3px"></div>
<div class="inp" style="left:785px;top:532px;width:96px;height:18px;line-height:17px;letter-spacing:0.3px"></div>
<div class="t" style="left:894px;top:537px;color:#111">차변</div>
<div class="t" style="left:935px;top:537px;color:#111">대변</div>
<div class="cb" style="left:919px;top:538px"></div>
<div class="cb" style="left:960px;top:538px"></div>
<div class="a" style="left:0px;top:594px;width:1318px;height:4px;background:#5c6264"></div>
</body></html>
